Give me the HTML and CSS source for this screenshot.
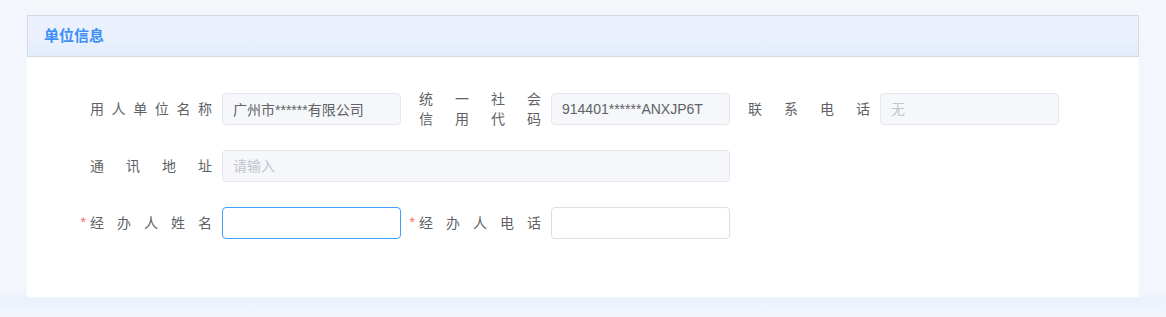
FILE: index.html
```html
<!DOCTYPE html>
<html lang="zh-CN">
<head>
  <meta charset="UTF-8">
  <title>单位信息</title>
  <link rel="stylesheet" href="styles.css">
</head>
<body>
  <div class="card">
    <div class="card-header">单位信息</div>

    <div class="card-body">
      <div class="form-grid">
        <!-- row 1 -->
        <div class="form-item">
          <label class="form-label">用人单位名称</label>
          <input class="form-input" type="text" value="广州市******有限公司" disabled>
        </div>
        <div class="form-item">
          <label class="form-label">统一社会<br>信用代码</label>
          <input class="form-input" type="text" value="914401******ANXJP6T" disabled>
        </div>
        <div class="form-item">
          <label class="form-label">联系电话</label>
          <input class="form-input" type="text" placeholder="无" disabled>
        </div>

        <!-- row 2 -->
        <div class="form-item span-2">
          <label class="form-label">通讯地址</label>
          <input class="form-input" type="text" placeholder="请输入" disabled>
        </div>

        <!-- row 3 -->
        <div class="form-item new-row">
          <label class="form-label required">经办人姓名</label>
          <input class="form-input active" type="text">
        </div>
        <div class="form-item">
          <label class="form-label required">经办人电话</label>
          <input class="form-input" type="text">
        </div>
      </div>
    </div>
  </div>
</body>
</html>
```

FILE: styles.css
```css
* {
  margin: 0;
  padding: 0;
  box-sizing: border-box;
}

body {
  font-family: 'Liberation Sans', 'Noto Sans CJK SC', sans-serif;
  background: linear-gradient(to bottom, #f3f6fc 290px, #ebf1fb 300px, #f3f6fc);
  padding: 0 27px;
  height: 317px;
  overflow: hidden;
}

.card {
  background: linear-gradient(to bottom, #f5f7fb 0, #f2f5fa 15px, #ffffff 15px);
  padding-top: 15px;
}

.card-header {
  height: 42px;
  line-height: 40px;
  padding-left: 16px;
  border: 1px solid #d6dae0;
  background: linear-gradient(to bottom, #eaf1fd 60%, #e2ecfc);
  color: #3d8ff5;
  font-size: 15px;
  font-weight: bold;
}

.card-body {
  background-color: white;
  padding: 36px 0 58px 63px;
}

.form-grid {
  display: grid;
  grid-template-columns: repeat(3, 311px);
  column-gap: 18px;
  row-gap: 25px;
}

.form-item {
  display: flex;
  align-items: center;
  gap: 10px;
  height: 32px;
}

.span-2 {
  grid-column: span 2;
}

.new-row {
  grid-column-start: 1;
}

.form-label {
  position: relative;
  width: 122px;
  flex-shrink: 0;
  font-size: 14px;
  line-height: 20px;
  color: #606266;
  text-align: justify;
  text-align-last: justify;
}

.form-label.required::before {
  content: '*';
  position: absolute;
  right: 100%;
  top: -1px;
  margin-right: 4px;
  color: #f56c6c;
}

.form-input {
  flex: 1;
  min-width: 0;
  height: 32px;
  padding: 0 10px;
  border: 1px solid #dcdfe6;
  border-radius: 4px;
  background-color: white;
  font-family: 'Liberation Sans', 'Noto Sans CJK SC', sans-serif;
  font-size: 14px;
  color: #606266;
  outline: none;
}

.form-input:disabled {
  background-color: #f5f7fa;
  border-color: #e4e7ed;
  color: #606266;
  -webkit-text-fill-color: #606266;
  opacity: 1;
}

.form-input::placeholder {
  color: #c0c4cc;
  -webkit-text-fill-color: #c0c4cc;
}

.form-input.active {
  border-color: #409eff;
}
```
